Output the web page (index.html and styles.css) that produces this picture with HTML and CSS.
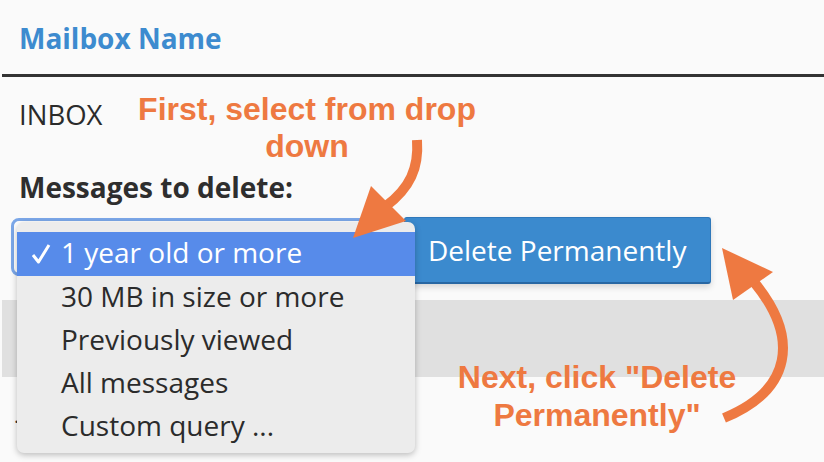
FILE: index.html
```html
<!DOCTYPE html>
<html lang="en">
  <head>
    <meta charset="UTF-8" />
    <meta name="viewport" content="width=device-width, initial-scale=1.0" />
    <title>Delete Messages</title>
    <link rel="stylesheet" href="styles.css">
  </head>
  <body>
    <div class="page">
      <div class="head">Mailbox Name</div>
      <div class="cell">
        <div class="mailbox">INBOX</div>
        <div class="label">Messages to delete:</div>
        <div class="controls">
          <div class="select"></div>
          <button type="button" class="btn">Delete Permanently</button>
        </div>
      </div>
      <div class="band"></div>
      <div class="blank"><span class="dot">.</span></div>
      <div class="band"></div>

      <!-- open dropdown menu -->
      <ul class="menu">
        <li class="active">
          <svg class="check" width="20" height="20" viewBox="0 0 20 20">
            <path d="M2 11 L7.5 18 L18 1" fill="none" stroke="#fff" stroke-width="3" stroke-linejoin="round" />
          </svg>1 year old or more
        </li>
        <li>30 MB in size or more</li>
        <li>Previously viewed</li>
        <li>All messages</li>
        <li>Custom query ...</li>
      </ul>

      <!-- annotations -->
      <div class="note note-first">First, select from drop<br />down</div>
      <div class="note note-next">Next, click "Delete<br />Permanently"</div>
      <svg class="arrows" width="824" height="462" viewBox="0 0 824 462">
        <path d="M417 140 C419 168 410 188 386 206" fill="none" stroke="#ee7941" stroke-width="10" />
        <polygon points="353,238 371,186 406,221" fill="#ee7941" />
        <path d="M724 418 C792 390 800 338 754 282" fill="none" stroke="#ee7941" stroke-width="10" />
        <polygon points="722,248 773,272 733,300" fill="#ee7941" />
      </svg>
    </div>
  </body>
</html>
```

FILE: styles.css
```css
body {
  margin: 0;
  background: #fafafa;
  font-family: "Open Sans", Arial, sans-serif;
  color: #333;
}

.page {
  position: relative;
  width: 824px;
  height: 462px;
  overflow: hidden;
}

.head {
  box-sizing: border-box;
  height: 77px;
  margin-left: 2px;
  padding: 19px 17px 0;
  font-size: 28px;
  font-weight: bold;
  color: #3d8bcf;
  border-bottom: 3px solid #333;
}

.cell {
  padding: 19px 0 0 19px;
}

.mailbox {
  font-size: 27.5px;
  line-height: 37px;
  color: #2b2b2b;
}

.label {
  margin-top: 35px;
  font-size: 28px;
  font-weight: bold;
  color: #2e2e2e;
}

.controls {
  display: flex;
  gap: 4px;
  margin-top: 11px;
  margin-left: -8px;
}

.select {
  box-sizing: border-box;
  width: 389px;
  height: 58px;
  margin-top: 1px;
  border: 3px solid #7ba7e8;
  border-radius: 8px;
  background: #fff;
}

.btn {
  box-sizing: border-box;
  width: 307px;
  height: 67px;
  padding: 0 0 0 23px;
  text-align: left;
  font-family: "Open Sans", Arial, sans-serif;
  font-size: 28px;
  color: #fff;
  background: #3b8ace;
  border: 1px solid #2f78ba;
  border-bottom: 2px solid #2867a3;
  border-radius: 3px;
  box-shadow: 0 3px 6px rgba(0, 0, 0, 0.15);
}

.band {
  height: 77px;
  margin-top: 16px;
  margin-left: 2px;
  background: #e0e0e0;
}

.band:last-of-type {
  margin-top: 0;
}

.blank {
  height: 72px;
  position: relative;
}

.dot {
  position: absolute;
  left: 14px;
  top: 25px;
  font-size: 20px;
  color: #333;
}

.menu {
  position: absolute;
  left: 17px;
  top: 222px;
  box-sizing: border-box;
  width: 398px;
  height: 231px;
  margin: 0;
  padding: 10px 0 6px;
  list-style: none;
  background: #ececec;
  border-radius: 7px;
  box-shadow: 0 2px 6px rgba(0, 0, 0, 0.25);
}

.menu li {
  position: relative;
  height: 43px;
  line-height: 40px;
  padding-left: 44px;
  font-size: 28px;
  color: #2b2b2b;
}

.menu li.active {
  height: 44px;
  line-height: 41px;
  background: #578bea;
  color: #fff;
}

.check {
  position: absolute;
  left: 14px;
  top: 12px;
}

.note {
  position: absolute;
  width: 440px;
  text-align: center;
  font-family: "Liberation Sans", Arial, sans-serif;
  font-weight: bold;
  font-size: 32px;
  color: #ee7941;
}

.note-first {
  left: 87px;
  top: 91px;
  line-height: 37px;
}

.note-next {
  left: 377px;
  top: 358px;
  line-height: 38px;
}

.arrows {
  position: absolute;
  left: 0;
  top: 0;
}
```
